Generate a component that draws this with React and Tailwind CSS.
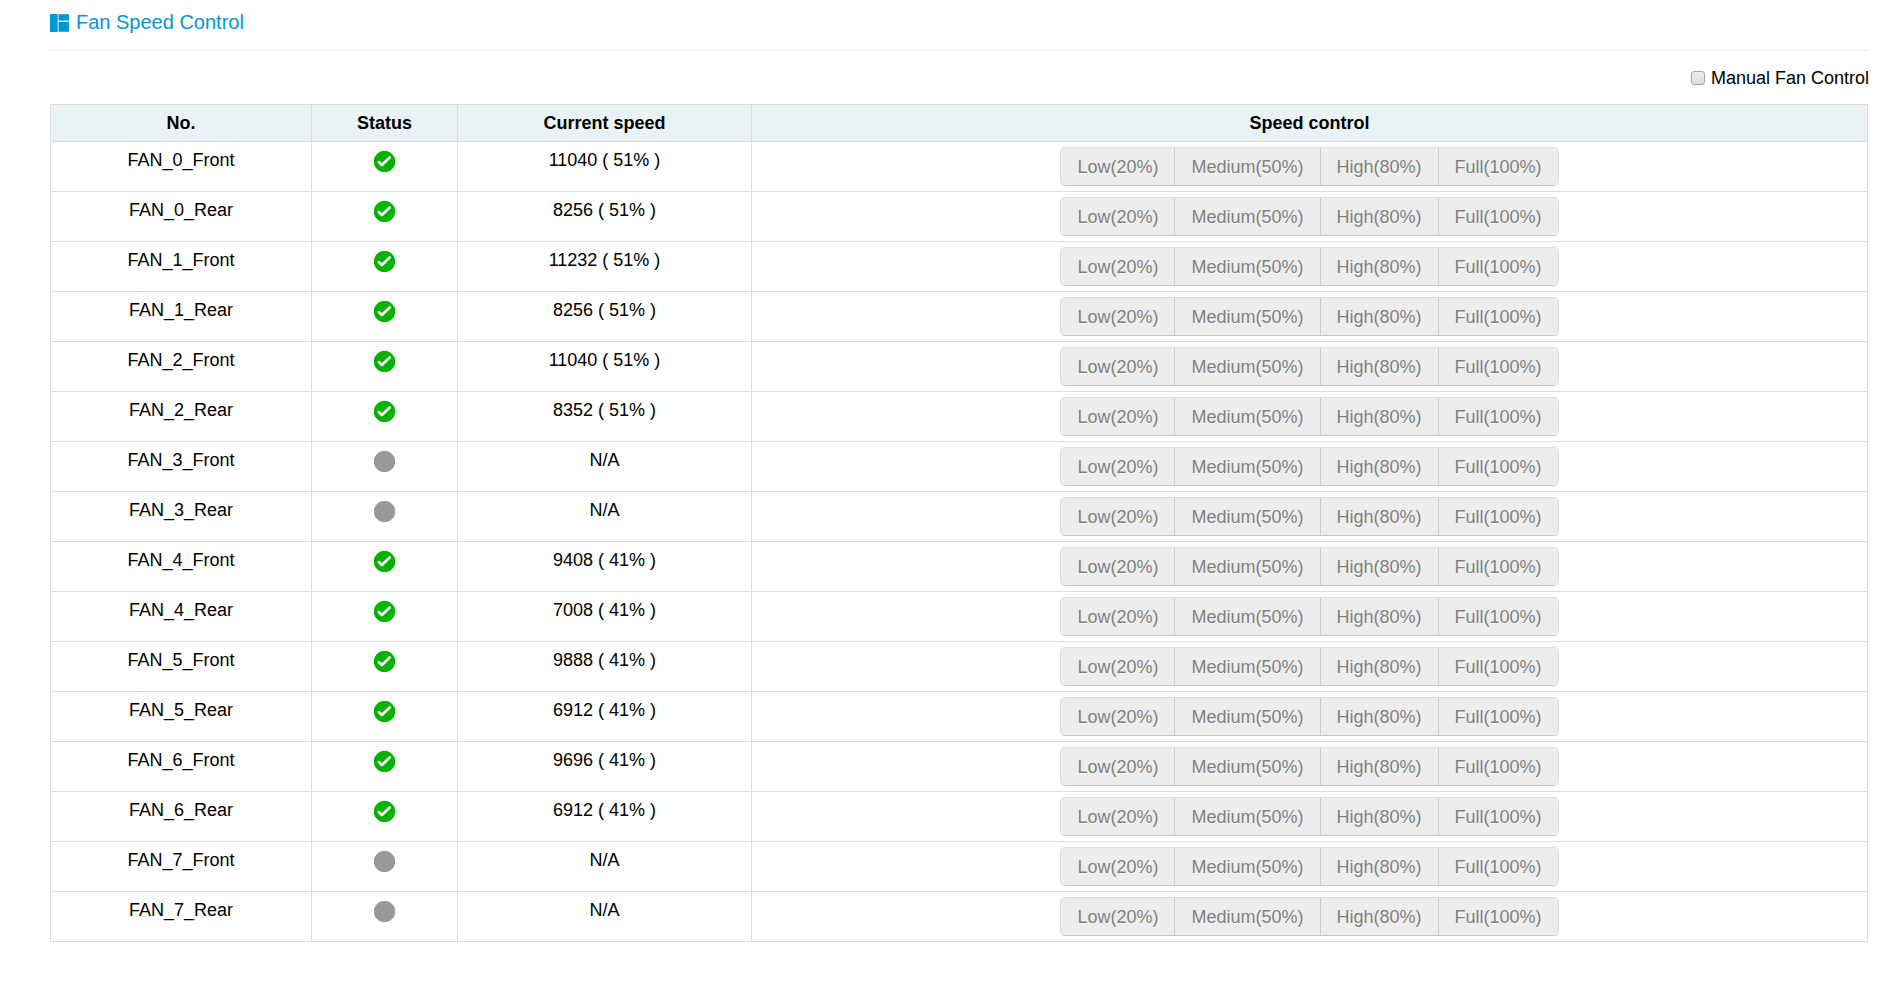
import React, { useState } from "react";

const fans = [
  { name: "FAN_0_Front", ok: true, speed: "11040 ( 51% )" },
  { name: "FAN_0_Rear", ok: true, speed: "8256 ( 51% )" },
  { name: "FAN_1_Front", ok: true, speed: "11232 ( 51% )" },
  { name: "FAN_1_Rear", ok: true, speed: "8256 ( 51% )" },
  { name: "FAN_2_Front", ok: true, speed: "11040 ( 51% )" },
  { name: "FAN_2_Rear", ok: true, speed: "8352 ( 51% )" },
  { name: "FAN_3_Front", ok: false, speed: "N/A" },
  { name: "FAN_3_Rear", ok: false, speed: "N/A" },
  { name: "FAN_4_Front", ok: true, speed: "9408 ( 41% )" },
  { name: "FAN_4_Rear", ok: true, speed: "7008 ( 41% )" },
  { name: "FAN_5_Front", ok: true, speed: "9888 ( 41% )" },
  { name: "FAN_5_Rear", ok: true, speed: "6912 ( 41% )" },
  { name: "FAN_6_Front", ok: true, speed: "9696 ( 41% )" },
  { name: "FAN_6_Rear", ok: true, speed: "6912 ( 41% )" },
  { name: "FAN_7_Front", ok: false, speed: "N/A" },
  { name: "FAN_7_Rear", ok: false, speed: "N/A" },
];

const levels = ["Low(20%)", "Medium(50%)", "High(80%)", "Full(100%)"];

function PanelIcon() {
  return (
    <svg width="19" height="18" viewBox="0 0 19 18" fill="#0099cf" aria-hidden="true">
      <rect x="0" y="0" width="7.7" height="18" />
      <rect x="8.5" y="0.2" width="10.5" height="6.4" />
      <rect x="8.5" y="7.8" width="10.5" height="10" />
    </svg>
  );
}

function StatusIcon({ ok }) {
  return (
    <svg
      className="mx-auto block"
      width="21"
      height="21"
      viewBox="0 0 21 21"
      role="img"
      aria-label={ok ? "Normal" : "Not present"}
    >
      <circle cx="10.5" cy="10.5" r="10.7" fill={ok ? "#00b300" : "#999999"} />
      {ok && (
        <path
          d="M5 11.2l2.9 2.9 7.8-7.6"
          fill="none"
          stroke="#fff"
          strokeWidth="2.8"
          strokeLinecap="round"
          strokeLinejoin="round"
        />
      )}
    </svg>
  );
}

function SpeedButtons({ fan, enabled }) {
  return (
    <div className="inline-flex overflow-hidden rounded-[5px] border border-[#dddddd] border-b-[#c8c8c8] align-top" role="group" aria-label={fan}>
      {levels.map((level) => (
        <button
          key={level}
          type="button"
          disabled={!enabled}
          className="h-[37px] border-l border-[#cccccc] bg-[#ededed] px-4 leading-6 text-[#333333] [text-shadow:0_1px_0_#f8f8f8] first:border-l-0 disabled:text-[#808080]"
        >
          {level}
        </button>
      ))}
    </div>
  );
}

export default function App() {
  const [manual, setManual] = useState(false);

  return (
    <main className="bg-white pr-[23px] pb-12 pl-[50px] font-['Liberation_Sans',Arial,sans-serif] text-[18px] leading-6 text-black">
      <header className="flex h-[51px] items-start gap-[7px] border-b border-[#eeeeee] pt-[14px] text-[#0099cf]">
        <PanelIcon />
        <h1 className="-mt-1 text-[20px] leading-6">Fan Speed Control</h1>
      </header>

      <div className="flex items-center justify-end pt-[15px] pb-[14px]">
        <label className="flex items-center gap-[6px]">
          <input
            type="checkbox"
            checked={manual}
            onChange={(e) => setManual(e.target.checked)}
            className="size-[14px] appearance-none rounded-[3px] border border-[#a5a5a5] bg-gradient-to-b from-[#eeeeee] to-[#dcdcdc] checked:bg-[#0099cf]"
          />
          Manual Fan Control
        </label>
      </div>

      <div className="pr-px">
        <table className="w-full table-fixed border-collapse text-center [&_td]:border [&_td]:border-[#dddddd] [&_th]:border [&_th]:border-[#dddddd]">
          <colgroup>
            <col className="w-[261px]" />
            <col className="w-[146px]" />
            <col className="w-[294px]" />
            <col />
          </colgroup>
          <thead className="bg-[#e9f3f6]">
            <tr>
              <th className="py-[6px]">No.</th>
              <th className="py-[6px]">Status</th>
              <th className="py-[6px]">Current speed</th>
              <th className="py-[6px]">Speed control</th>
            </tr>
          </thead>
          <tbody>
            {fans.map((fan) => (
              <tr key={fan.name} className="align-top">
                <td className="pt-[6px]">{fan.name}</td>
                <td className="pt-[9px]">
                  <StatusIcon ok={fan.ok} />
                </td>
                <td className="pt-[6px]">{fan.speed}</td>
                <td className="py-[5px]">
                  <SpeedButtons fan={fan.name} enabled={manual} />
                </td>
              </tr>
            ))}
          </tbody>
        </table>
      </div>
    </main>
  );
}
